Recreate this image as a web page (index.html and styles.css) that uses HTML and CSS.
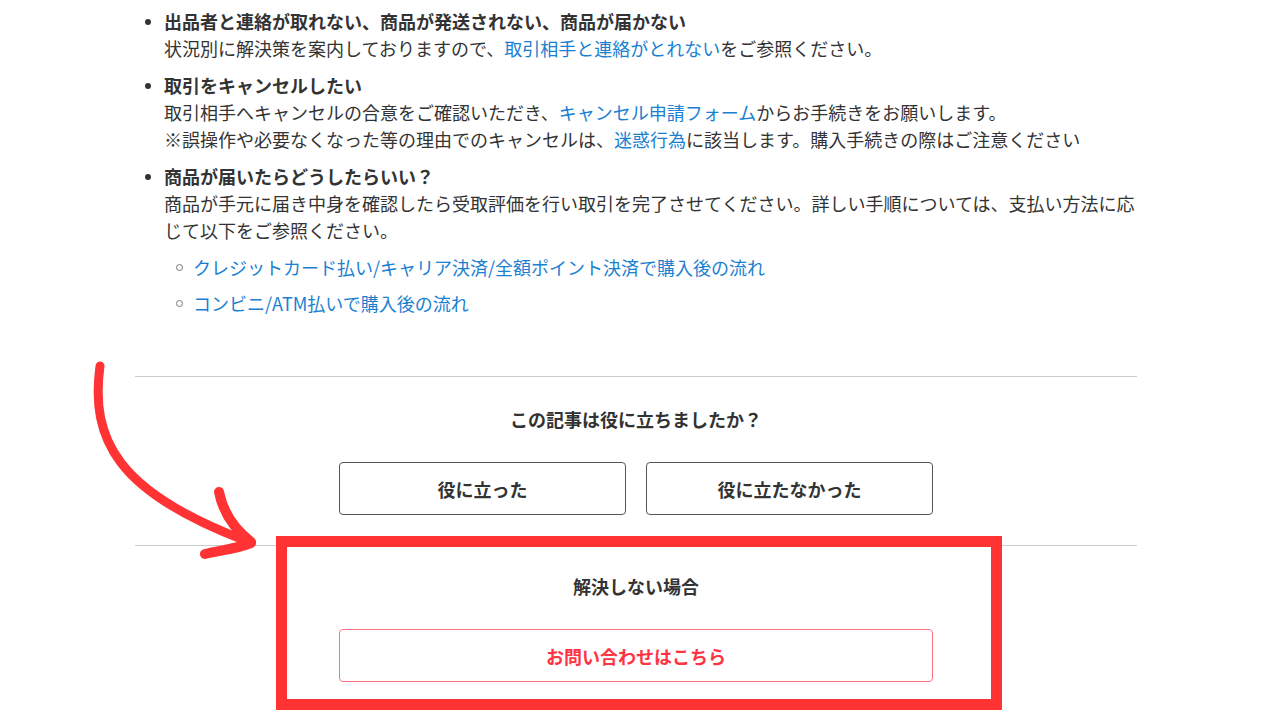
FILE: index.html
```html
<!DOCTYPE html>
<html lang="ja">
<head>
  <meta charset="UTF-8">
  <meta name="viewport" content="width=device-width, initial-scale=1.0">
  <title>取引について</title>
  <link rel="stylesheet" href="styles.css">
</head>
<body>
  <div class="page">
    <ul class="faq">
      <li>
        <p class="faq-title">出品者と連絡が取れない、商品が発送されない、商品が届かない</p>
        <p>状況別に解決策を案内しておりますので、<a href="#">取引相手と連絡がとれない</a>をご参照ください。</p>
      </li>
      <li>
        <p class="faq-title">取引をキャンセルしたい</p>
        <p>取引相手へキャンセルの合意をご確認いただき、<a href="#">キャンセル申請フォーム</a>からお手続きをお願いします。</p>
        <p>※誤操作や必要なくなった等の理由でのキャンセルは、<a href="#">迷惑行為</a>に該当します。購入手続きの際はご注意ください</p>
      </li>
      <li>
        <p class="faq-title">商品が届いたらどうしたらいい？</p>
        <p>商品が手元に届き中身を確認したら受取評価を行い取引を完了させてください。詳しい手順については、支払い方法に応じて以下をご参照ください。</p>
        <ul class="sub">
          <li><a href="#">クレジットカード払い/キャリア決済/全額ポイント決済で購入後の流れ</a></li>
          <li><a href="#">コンビニ/ATM払いで購入後の流れ</a></li>
        </ul>
      </li>
    </ul>

    <section class="feedback">
      <h3>この記事は役に立ちましたか？</h3>
      <div class="btn-row">
        <button class="btn">役に立った</button>
        <button class="btn">役に立たなかった</button>
      </div>
    </section>

    <section class="contact">
      <h3>解決しない場合</h3>
      <div class="btn-row">
        <button class="btn btn-wide">お問い合わせはこちら</button>
      </div>
    </section>
  </div>

  <!-- annotation overlay -->
  <div class="mark-box"></div>
  <svg class="mark-arrow" width="1280" height="720" viewBox="0 0 1280 720">
    <path d="M100 366 C90 440 118 492 244 540" fill="none" stroke="#ff3333" stroke-width="9" stroke-linecap="round"/>
    <path d="M219 492 C223 512 233 528 251 542" fill="none" stroke="#ff3333" stroke-width="10" stroke-linecap="round"/>
    <path d="M251 543 C236 549 222 550 205 554" fill="none" stroke="#ff3333" stroke-width="10" stroke-linecap="round"/>
  </svg>
</body>
</html>
```

FILE: styles.css
```css
body { margin: 0; background: #fff; color: #333; font-family: "Noto Sans CJK JP", "Noto Sans", sans-serif; font-size: 18px; line-height: 27px; }
p { margin: 0; }
a { color: #1a80d2; text-decoration: none; }

.page { width: 1002px; margin-left: 135px; padding-top: 8px; }

.faq { list-style: none; margin: 0; padding: 0; }
.faq > li { position: relative; padding-left: 29px; margin-bottom: 10px; }
.faq > li::before { content: ""; position: absolute; left: 10px; top: 11px; width: 6px; height: 6px; border-radius: 50%; background: #333; }
.faq-title { font-weight: bold; }

.sub { list-style: none; margin: 10px 0 0; padding: 0; }
.sub li { position: relative; padding-left: 29px; margin-bottom: 9px; }
.sub li::before { content: ""; position: absolute; left: 12px; top: 10px; width: 5px; height: 5px; border-radius: 50%; border: 1.5px solid #777; }

.feedback { margin-top: 59px; border-top: 1px solid #ccc; padding: 29px 0 30px; text-align: center; }
.contact { border-top: 1px solid #ccc; padding: 27px 0 0; text-align: center; }
h3 { margin: 0; font-size: 18px; font-weight: bold; line-height: 27px; }

.btn-row { display: flex; justify-content: center; gap: 20px; margin-top: 29px; }
.btn { width: 287px; height: 53px; background: #fff; border: 1.5px solid #555; border-radius: 4px; font-family: inherit; font-size: 18px; font-weight: bold; color: #333; cursor: pointer; }
.btn-wide { width: 594px; border: 1.5px solid #ff7380; color: #ff3341; }

.mark-box { position: absolute; left: 276px; top: 536px; width: 704px; height: 152px; border: 11px solid #ff3333; }
.mark-arrow { position: absolute; left: 0; top: 0; pointer-events: none; }
```
